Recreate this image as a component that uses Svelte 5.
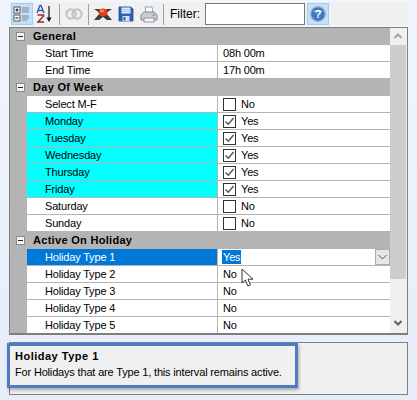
<script>
  const groups = [
    { title: 'General', rows: [
      { name: 'Start Time', value: '08h 00m' },
      { name: 'End Time', value: '17h 00m' }
    ] },
    { title: 'Day Of Week', rows: [
      { name: 'Select M-F', value: 'No', check: false },
      { name: 'Monday', value: 'Yes', check: true, cyan: true },
      { name: 'Tuesday', value: 'Yes', check: true, cyan: true },
      { name: 'Wednesday', value: 'Yes', check: true, cyan: true },
      { name: 'Thursday', value: 'Yes', check: true, cyan: true },
      { name: 'Friday', value: 'Yes', check: true, cyan: true },
      { name: 'Saturday', value: 'No', check: false },
      { name: 'Sunday', value: 'No', check: false }
    ] },
    { title: 'Active On Holiday', rows: [
      { name: 'Holiday Type 1', value: 'Yes', selected: true },
      { name: 'Holiday Type 2', value: 'No' },
      { name: 'Holiday Type 3', value: 'No' },
      { name: 'Holiday Type 4', value: 'No' },
      { name: 'Holiday Type 5', value: 'No' }
    ] }
  ];
</script>

<div class="page">
  <div class="toolbar">
    <button class="tool active" aria-label="Categorized">
      <svg width="18" height="18" viewBox="0 0 18 18">
        <rect x="1" y="2" width="6" height="6" fill="#fff" stroke="#555"/>
        <path d="M2.5 5h3M4 3.5v3" stroke="#000"/>
        <rect x="1" y="10" width="6" height="6" fill="#fff" stroke="#555"/>
        <path d="M2.5 13h3" stroke="#000"/>
        <path d="M9 3h7M9 5h7M9 7h7M9 11h7M9 13h7M9 15h5" stroke="#7b8794"/>
      </svg>
    </button>
    <button class="tool" aria-label="Alphabetical">
      <svg width="18" height="20" viewBox="0 0 18 20">
        <path d="M1 9 4 1.5h1L8 9M2.4 6.5h4.2" fill="none" stroke="#2f5fb5" stroke-width="1.4"/>
        <path d="M1.5 11h6v1L2 18h6" fill="none" stroke="#8c2f3a" stroke-width="1.5"/>
        <path d="M13 2v14" stroke="#111" stroke-width="1.2"/>
        <path d="M10.5 13.5h5L13 18z" fill="#111"/>
      </svg>
    </button>
    <span class="sep"></span>
    <button class="tool" aria-label="Property pages">
      <svg width="18" height="14" viewBox="0 0 18 14" fill="none" stroke="#c4c4c4" stroke-width="2.2">
        <circle cx="6" cy="7" r="4.6"/>
        <circle cx="12" cy="7" r="4.6"/>
      </svg>
    </button>
    <span class="sep"></span>
    <button class="tool" aria-label="Clear">
      <svg width="20" height="14" viewBox="0 0 20 14">
        <path d="M1 2l6 4-6 7h5l4-3 4 3h5l-6-7 6-4h-5L10 4 6 2z" fill="#3c3c3c"/>
        <ellipse cx="10" cy="5.5" rx="4.5" ry="4" fill="#e2401c"/>
        <ellipse cx="9" cy="4" rx="2" ry="1.2" fill="#f5a25a"/>
      </svg>
    </button>
    <button class="tool" aria-label="Save">
      <svg width="16" height="16" viewBox="0 0 16 16">
        <path d="M1 1h12l2 2v12H1z" fill="#2762b4" stroke="#1d4c92" stroke-width=".8"/>
        <rect x="3.5" y="1.5" width="9" height="6" fill="#e8eef6"/>
        <path d="M4 3.5h8M4 5.5h8" stroke="#a9bfdc"/>
        <rect x="4.5" y="10" width="7" height="5" fill="#d9e3f0"/>
        <rect x="5.5" y="11" width="2" height="3.5" fill="#2762b4"/>
      </svg>
    </button>
    <button class="tool" aria-label="Print">
      <svg width="18" height="17" viewBox="0 0 18 17">
        <path d="M5 1h7l1.5 7h-7z" fill="#fff" stroke="#9aa3ad"/>
        <path d="M1 9l3-3h10l3 3v5H1z" fill="#c9ced3" stroke="#7e8891"/>
        <rect x="4" y="12" width="10" height="4" fill="#f4f5f6" stroke="#8d959d"/>
        <circle cx="13.5" cy="9" r="1" fill="#5fae6a"/>
      </svg>
    </button>
    <span class="sep"></span>
    <label class="filter">Filter:<input type="text" /></label>
    <button class="tool active help" aria-label="Help">
      <svg width="16" height="16" viewBox="0 0 16 16">
        <circle cx="8" cy="8" r="7.3" fill="#3d78c9" stroke="#a7abb0" stroke-width="1.2"/>
        <path d="M3 6a5.5 4 0 0 1 10 0z" fill="#8db5ea"/>
        <text x="8" y="12" text-anchor="middle">?</text>
      </svg>
    </button>
  </div>

  <div class="grid">
    <div class="rows">
      {#each groups as group}
        <div class="header">
          <span class="toggle"></span>
          <strong>{group.title}</strong>
        </div>
        {#each group.rows as row}
          <div class="row">
            <div class="name" class:cyan={row.cyan} class:selected={row.selected}>{row.name}</div>
            <div class="value">
              {#if row.check !== undefined}
                <span class="box">
                  {#if row.check}
                    <svg width="11" height="11" viewBox="0 0 11 11"><path d="M1.5 5.5 4.3 8.3 9.6 2" fill="none" stroke="#555" stroke-width="1.4"/></svg>
                  {/if}
                </span>
              {/if}
              {#if row.selected}
                <span class="picked">{row.value}</span>
                <span class="drop">
                  <svg width="9" height="6" viewBox="0 0 9 6"><path d="M.5 1 4.5 5 8.5 1" fill="none" stroke="#555"/></svg>
                </span>
              {:else}
                <span>{row.value}</span>
              {/if}
            </div>
          </div>
        {/each}
      {/each}
    </div>
    <div class="scrollbar">
      <svg class="arrow" width="16" height="17" viewBox="0 0 16 17"><path d="M4.5 10 8 6.5 11.5 10" fill="none" stroke="#a6a6a6" stroke-width="2"/></svg>
      <div class="thumb"></div>
      <svg class="arrow down" width="16" height="17" viewBox="0 0 16 17"><path d="M4.5 7 8 10.5 11.5 7" fill="none" stroke="#606060" stroke-width="2"/></svg>
    </div>
  </div>

  <div class="help-box">
    <strong>Holiday Type 1</strong>
    <p>For Holidays that are Type 1, this interval remains active.</p>
  </div>

  <div class="callout"></div>
  <svg class="cursor" width="13" height="20" viewBox="0 0 13 20">
    <path d="M1 1v14l3.4-3 2.4 6 2.6-1-2.4-5.8H12z" fill="#fff" stroke="#333"/>
  </svg>
</div>

<style>
  :global(body) {
    margin: 0;
  }
  .page {
    position: relative;
    width: 417px;
    height: 400px;
    box-sizing: border-box;
    padding: 2px 9px 0;
    overflow: hidden;
    background: linear-gradient(180deg, #f1f5fd, #e6edf9);
    font: 11px/17px "Liberation Sans", Arial, sans-serif;
    letter-spacing: -0.17px;
    color: #000;
  }
  .toolbar {
    display: flex;
    align-items: center;
    gap: 1px;
    height: 24px;
    margin-bottom: 1px;
    padding-left: 2px;
    background: #f0f0f0;
  }
  .tool {
    display: grid;
    place-items: center;
    width: 22px;
    height: 22px;
    padding: 0;
    border: 1px solid transparent;
    background: none;
  }
  .tool.active {
    border-color: #99d1ff;
    background: #c4e0f7;
  }
  .sep {
    width: 1px;
    height: 21px;
    margin: 0 2px;
    background: #a0a0a0;
  }
  .filter {
    display: flex;
    align-items: center;
    gap: 5px;
    margin-left: 3px;
    font-size: 12px;
    letter-spacing: 0;
  }
  .filter input {
    width: 100px;
    height: 22px;
    padding: 0;
    box-sizing: border-box;
    border: 1px solid #7a7a7a;
    background: #fff;
  }
  .help {
    margin-left: 1px;
  }
  .help text {
    font: bold 11px "Liberation Sans", sans-serif;
    fill: #fff;
  }
  .grid {
    display: flex;
    height: 308px;
    overflow: hidden;
    box-sizing: border-box;
    border: 1px solid #7f7f7f;
    border-bottom-width: 2px;
    background: #f0f0f0;
  }
  .rows {
    width: 380px;
    flex: none;
    background: #b4b4b4;
  }
  .header {
    display: flex;
    align-items: center;
    height: 17px;
    padding-left: 6px;
  }
  .header strong {
    margin-left: 8px;
    font-weight: 700;
    letter-spacing: 0.3px;
  }
  .toggle {
    position: relative;
    width: 9px;
    height: 9px;
    box-sizing: border-box;
    border: 1px solid #8a8a8a;
    background: #f4f4f4;
  }
  .toggle::after {
    content: "";
    position: absolute;
    left: 1px;
    top: 3px;
    width: 5px;
    height: 1px;
    background: #222;
  }
  .row {
    display: grid;
    grid-template-columns: 191px 1fr;
    height: 17px;
    margin-left: 17px;
    box-sizing: border-box;
    border-bottom: 1px solid #b4b4b4;
    background: #fff;
  }
  .name {
    padding-left: 18px;
    height: 16px;
    line-height: 16px;
    border-right: 1px solid #b4b4b4;
    white-space: nowrap;
  }
  .name.cyan {
    background: #00ffff;
  }
  .name.selected {
    background: #0078d7;
    color: #fff;
  }
  .value {
    display: flex;
    align-items: center;
    height: 16px;
    padding-left: 5px;
    white-space: nowrap;
  }
  .box {
    display: grid;
    place-items: center;
    width: 13px;
    height: 13px;
    box-sizing: border-box;
    margin-right: 5px;
    border: 1px solid #333;
    background: #fff;
  }
  .picked {
    padding: 0 1px;
    margin-left: -1px;
    background: #0078d7;
    color: #fff;
    line-height: 14px;
  }
  .drop {
    display: grid;
    place-items: center;
    width: 15px;
    height: 16px;
    margin-left: auto;
    box-sizing: border-box;
    border: 1px solid #adadad;
    background: #e6e6e6;
  }
  .scrollbar {
    display: flex;
    flex-direction: column;
    flex: 1;
    align-items: stretch;
    padding-right: 1px;
  }
  .arrow {
    flex: none;
    display: block;
  }
  .down {
    margin-top: auto;
    margin-bottom: 2px;
  }
  .thumb {
    height: 234px;
    background: #cdcdcd;
  }
  .help-box {
    height: 53px;
    margin-top: 7px;
    padding: 5px 5px 0;
    box-sizing: border-box;
    border: 1px solid #7f7f7f;
    background: #f0f0f0;
  }
  .help-box strong {
    letter-spacing: 0.5px;
  }
  .help-box p {
    margin: -1px 0 0;
  }
  .callout {
    position: absolute;
    left: 7px;
    top: 343px;
    width: 291px;
    height: 45px;
    box-sizing: border-box;
    border: 3px solid #4e7ac7;
    box-shadow: 1px 2px 3px rgba(0, 0, 0, 0.3);
  }
  .cursor {
    position: absolute;
    left: 241px;
    top: 268px;
  }
</style>
